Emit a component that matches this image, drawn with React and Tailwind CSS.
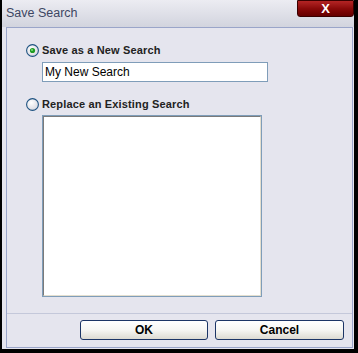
import React from 'react'

function Radio({ checked }) {
  return (
    <svg width="13" height="13" viewBox="0 0 13 13" className="shrink-0">
      <defs>
        <radialGradient id={checked ? 'rg1' : 'rg2'} cx="0.4" cy="0.35" r="0.7">
          <stop offset="0" stopColor="#ffffff" />
          <stop offset="1" stopColor="#d6d6de" />
        </radialGradient>
      </defs>
      <circle cx="6.5" cy="6.5" r="5.9" fill={`url(#${checked ? 'rg1' : 'rg2'})`} stroke="#1d5281" strokeWidth="1.1" />
      {checked && (
        <>
          <circle cx="6.5" cy="6.5" r="2.6" fill="#1f9b22" />
          <circle cx="6" cy="6" r="1" fill="#7fe07f" />
        </>
      )}
    </svg>
  )
}

export default function App() {
  const font = { fontFamily: '"Liberation Sans", Arial, sans-serif' }
  return (
    <div className="w-[358px] h-[353px] bg-black pl-[2px] pr-[4px] pb-[4px] flex flex-col" style={font}>
      <div className="flex-1 flex flex-col bg-[#e5e5ee]">
        {/* title bar */}
        <div className="h-[27px] flex items-start justify-between bg-gradient-to-b from-[#ececf2] to-[#d2d4de]">
          <div className="pl-[4px] pt-[6px] text-[12.5px] leading-[14px] text-[#3d4763]">Save Search</div>
          <div className="w-[57px] h-[17px] rounded-b-[3px] border border-[#3a0000] bg-gradient-to-b from-[#b42424] via-[#8a0a0a] to-[#650000] flex items-center justify-center text-white font-bold text-[13px] leading-none">
            X
          </div>
        </div>

        {/* body frame */}
        <div className="flex-1 ml-[4px] mr-[1px] mb-[1px] border border-[#9aa5c9] flex flex-col">
          <div className="h-[14px] mt-[15px] ml-[19px] flex items-center gap-[3px]">
            <Radio checked />
            <span className="text-[11px] font-bold text-[#222] tracking-[0.15px]">Save as a New Search</span>
          </div>
          <div className="mt-[5px] ml-[35px] w-[226px] h-[20px] bg-white border border-[#7f9db9] flex items-center pl-[2px] text-[12px] text-black">
            My New Search
          </div>
          <div className="h-[14px] mt-[15px] ml-[19px] flex items-center gap-[3px]">
            <Radio />
            <span className="text-[11px] font-bold text-[#222] tracking-[0.15px]">Replace an Existing Search</span>
          </div>
          <div className="mt-[4px] ml-[35px] w-[220px] h-[182px] border border-[#7f9db9]">
            <div className="w-full h-full bg-white border-t border-l border-t-[#7a7a7a] border-l-[#7a7a7a] border-r border-b border-r-[#e4dfcf] border-b-[#e4dfcf]" />
          </div>
          <div className="mt-[16px] h-px bg-[#c4c8da]" />
          <div className="mt-[6px] pr-[8px] flex justify-end gap-[7px]">
            <button className="w-[128px] h-[20px] rounded-[3px] border border-[#1c3566] bg-gradient-to-b from-white via-[#f6f6f3] to-[#dcdad2] text-[12px] font-bold text-black leading-none">
              OK
            </button>
            <button className="w-[129px] h-[20px] rounded-[3px] border border-[#1c3566] bg-gradient-to-b from-white via-[#f6f6f3] to-[#dcdad2] text-[12px] font-bold text-black leading-none">
              Cancel
            </button>
          </div>
        </div>
      </div>
    </div>
  )
}
